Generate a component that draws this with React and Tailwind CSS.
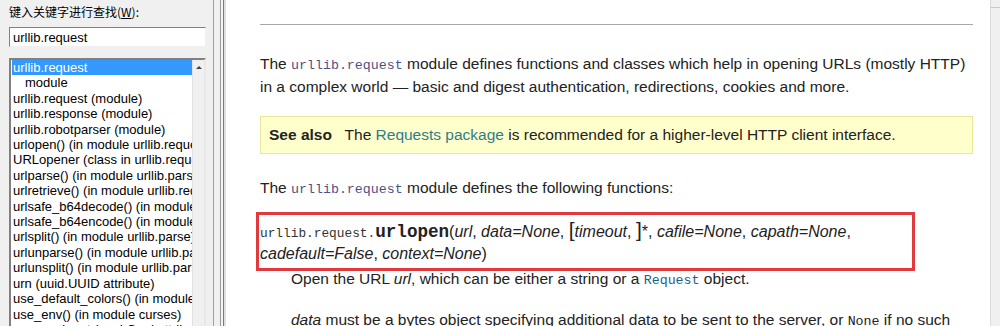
const items = [
  { t: 'urllib.request', sel: true },
  { t: 'module', indent: true },
  { t: 'urllib.request (module)' },
  { t: 'urllib.response (module)' },
  { t: 'urllib.robotparser (module)' },
  { t: 'urlopen() (in module urllib.request)' },
  { t: 'URLopener (class in urllib.request)' },
  { t: 'urlparse() (in module urllib.parse)' },
  { t: 'urlretrieve() (in module urllib.request)' },
  { t: 'urlsafe_b64decode() (in module base64)' },
  { t: 'urlsafe_b64encode() (in module base64)' },
  { t: 'urlsplit() (in module urllib.parse)' },
  { t: 'urlunparse() (in module urllib.parse)' },
  { t: 'urlunsplit() (in module urllib.parse)' },
  { t: 'urn (uuid.UUID attribute)' },
  { t: 'use_default_colors() (in module curses)' },
  { t: 'use_env() (in module curses)' },
  { t: 'use_rawinput (cmd.Cmd attribute)' },
]

const mono = "font-['Liberation_Mono',monospace]"

function Sidebar() {
  return (
    <div className="w-[213px] shrink-0 bg-[#f0f0f0] pl-[9px] pr-[7px] font-['Liberation_Sans','Noto_Sans_CJK_SC',sans-serif]">
      <div className="h-[27px] pt-[4px] text-[12px] leading-[16px] text-black font-['Noto_Sans_CJK_SC',sans-serif]">
        键入关键字进行查找(<span className="underline">W</span>):
      </div>
      <div className="h-[20px] border border-t-[#808080] border-l-[#808080] border-r-[#f0f0f0] border-b-[#f0f0f0] bg-white pl-[3px] text-[13px] leading-[19px] text-black">
        urllib.request
      </div>
      <div className="mt-[11px] h-[300px] flex border-2 border-t-[#808080] border-l-[#808080] border-r-[#e8e8e8] border-b-[#e8e8e8] bg-white">
        <div className="flex-1 min-w-0 overflow-hidden pl-[1px] text-[13px] leading-[15.4px] text-black whitespace-nowrap">
          {items.map((it, i) => (
            <div
              key={i}
              className={
                (it.sel ? 'bg-[#3399ff] text-white ' : '') +
                (it.indent ? 'pl-[13px] ' : 'pl-[1px] ')
              }
            >
              {it.t}
            </div>
          ))}
        </div>
        <div className="w-[12px] shrink-0 bg-[#f0f0f0] border-l border-[#e2e2e2] flex justify-center pt-[6px]">
          <div className="w-0 h-0 border-l-[3px] border-r-[3px] border-b-[3px] border-l-transparent border-r-transparent border-b-[#404040]" />
        </div>
      </div>
    </div>
  )
}

function Code({ children, className = '' }) {
  return <span className={`${mono} text-[13.3px] leading-[0] ${className}`}>{children}</span>
}

function Content() {
  return (
    <div className="flex-1 min-w-0 bg-white pl-[34px] pr-[17px] pt-[24px] text-[15.5px] leading-[23px] text-[#222] font-['Liberation_Sans',sans-serif] overflow-hidden">
      <div className="h-px bg-[#a8a8a8]" />
      <p className="mt-[27px]">
        The <Code className="text-[#4f4f86]">urllib.request</Code> module defines functions and classes which help in opening URLs (mostly HTTP) in a complex world — basic and digest authentication, redirections, cookies and more.
      </p>
      <div className="mt-[18px] h-[38px] border border-[#e8e89c] bg-[#ffffcc] pl-[8px] leading-[36px]">
        <span className="font-bold">See also</span>&nbsp;&nbsp; The <span className="text-[#2e7d8c]">Requests package</span> is recommended for a higher-level HTTP client interface.
      </div>
      <p className="mt-[22px]">
        The <Code className="text-[#4f4f86]">urllib.request</Code> module defines the following functions:
      </p>
      <div className="mt-[13px] ml-[-4px] w-[659px] border-[3px] border-[#e0393e] pl-[1px] pt-[6px] pb-[3px] text-[16px] leading-[22px]">
        <span className={`${mono} text-[12.8px] leading-[0] text-[#333]`}>urllib.request.</span>
        <span className={`${mono} text-[17.6px] leading-[0] font-bold text-[#222]`}>urlopen</span>
        (<em>url</em>, <em>data=None</em>, <span className="text-[21px] leading-[0]">[</span><em>timeout</em>, <span className="text-[21px] leading-[0]">]</span>*, <em>cafile=None</em>, <em>capath=None</em>, <em>cadefault=False</em>, <em>context=None</em>)
      </div>
      <div className="ml-[31px] mt-[-4px]">
        <p>
          Open the URL <em>url</em>, which can be either a string or a <Code className="text-[#1f5f85]">Request</Code> object.
        </p>
        <p className="mt-[18px]">
          <em>data</em> must be a bytes object specifying additional data to be sent to the server, or <Code className="text-[#222]">None</Code> if no such data is needed.
        </p>
      </div>
    </div>
  )
}

export default function App() {
  return (
    <div className="w-[1000px] h-[326px] flex overflow-hidden bg-[#f0f0f0]">
      <Sidebar />
      <div className="w-px shrink-0 bg-[#a0a0a0]" />
      <div className="w-[6px] shrink-0 bg-[#f0f0f0]" />
      <div className="w-px shrink-0 bg-[#9a9a9a]" />
      <div className="w-[2px] shrink-0 bg-[#f4f4f4]" />
      <div className="w-px shrink-0 bg-[#7a7a7a]" />
      <div className="w-[2px] shrink-0 bg-[#e0e0e0]" />
      <Content />
      <div className="w-[10px] shrink-0 bg-[#f0f0f0] border-l border-[#dcdcdc]">
        <div className="h-[8px] border-b border-[#c8c8c8]" />
      </div>
    </div>
  )
}
